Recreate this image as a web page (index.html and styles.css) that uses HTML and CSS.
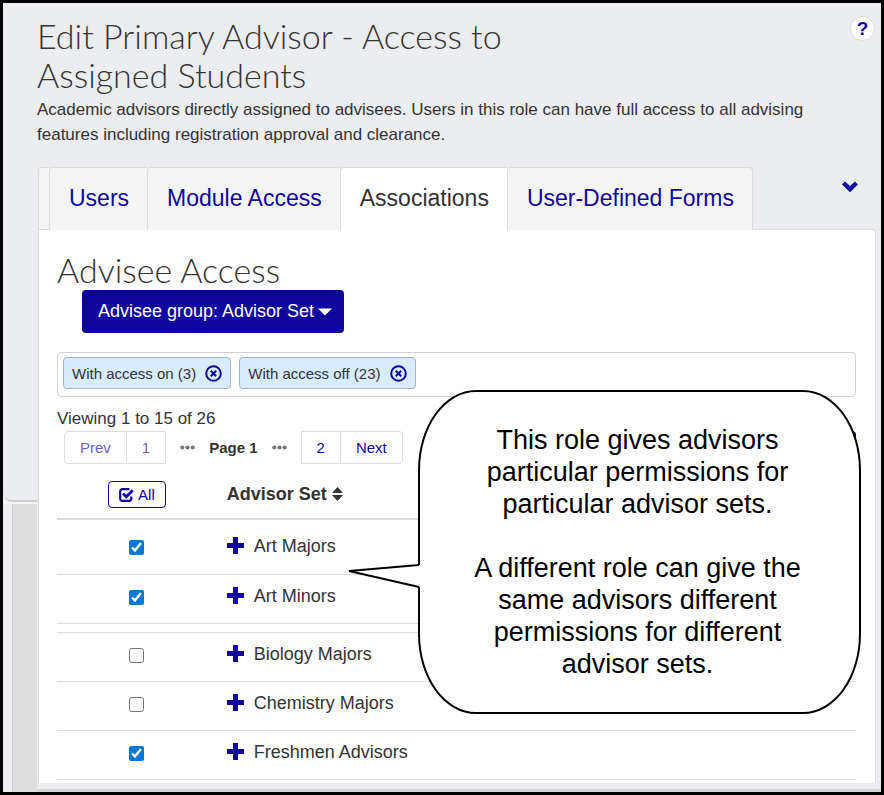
FILE: index.html
```html
<!DOCTYPE html>
<html lang="en">
<head>
    <meta charset="UTF-8">
    <meta name="viewport" content="width=device-width, initial-scale=1.0">
    <title>Edit Primary Advisor</title>
    <link rel="stylesheet" href="styles.css">
</head>
<body>
    <div class="gutter">
        <div class="gutter-top"></div>
        <div class="gutter-bottom"></div>
    </div>

    <main class="main">
        <header class="header">
            <div>
                <h1>Edit Primary Advisor - Access to Assigned Students</h1>
                <p>Academic advisors directly assigned to advisees. Users in this role can have full access to all advising features including registration approval and clearance.</p>
            </div>
            <button class="help" aria-label="Help">?</button>
        </header>

        <nav class="tabs">
            <span class="tab-edge"></span>
            <a class="tab" href="#users">Users</a>
            <a class="tab" href="#modules">Module Access</a>
            <a class="tab active" href="#associations">Associations</a>
            <a class="tab last" href="#forms">User-Defined Forms</a>
            <button class="more" aria-label="More tabs">
                <svg width="18" height="12" viewBox="0 0 18 12"><path d="M1 3.5L4 .5L9 5L14 .5L17 3.5L9 11.2Z" fill="#10069f"/></svg>
            </button>
        </nav>

        <section class="panel">
            <h2>Advisee Access</h2>
            <button class="group-btn">Advisee group: Advisor Set
                <svg width="14" height="8" viewBox="0 0 14 8"><path d="M0 0.5H14L7 7.5Z" fill="#fff"/></svg>
            </button>

            <div class="filters">
                <span class="chip">With access on (3)
                    <button aria-label="Remove filter"><svg width="17" height="17" viewBox="0 0 17 17" fill="none" stroke="#10069f" stroke-width="2"><circle cx="8.5" cy="8.5" r="7.3"/><path d="M5.8 5.8L11.2 11.2M11.2 5.8L5.8 11.2"/></svg></button>
                </span>
                <span class="chip">With access off (23)
                    <button aria-label="Remove filter"><svg width="17" height="17" viewBox="0 0 17 17" fill="none" stroke="#10069f" stroke-width="2"><circle cx="8.5" cy="8.5" r="7.3"/><path d="M5.8 5.8L11.2 11.2M11.2 5.8L5.8 11.2"/></svg></button>
                </span>
            </div>

            <div class="viewing">Viewing 1 to 15 of 26</div>
            <div class="pager">
                <div class="pages">
                    <button disabled>Prev</button>
                    <button disabled>1</button>
                </div>
                <svg class="dots" width="15" height="5" viewBox="0 0 15 5" fill="#777"><circle cx="2.3" cy="2.5" r="2.1"/><circle cx="7.5" cy="2.5" r="2.1"/><circle cx="12.7" cy="2.5" r="2.1"/></svg>
                <b>Page 1</b>
                <svg class="dots" width="15" height="5" viewBox="0 0 15 5" fill="#777"><circle cx="2.3" cy="2.5" r="2.1"/><circle cx="7.5" cy="2.5" r="2.1"/><circle cx="12.7" cy="2.5" r="2.1"/></svg>
                <div class="pages">
                    <button>2</button>
                    <button>Next</button>
                </div>
                <button class="save" aria-label="Save"></button>
            </div>

            <table class="sets">
                <thead>
                    <tr>
                        <th>
                            <button class="all-btn">
                                <svg width="15" height="14" viewBox="0 0 15 14" fill="none" stroke="#10069f"><path d="M10.5 1.2H3.5Q1.2 1.2 1.2 3.5V10.5Q1.2 12.8 3.5 12.8H10Q12.3 12.8 12.3 10.5V8.5" stroke-width="2.2"/><path d="M4 5.5L7.3 8.8L13.8 2.3" stroke-width="2.8"/></svg>
                                All
                            </button>
                        </th>
                        <th>Advisor Set
                            <svg class="sort" width="11" height="14" viewBox="0 0 11 14" fill="#333"><path d="M0 6L5.5 0L11 6ZM0 8H11L5.5 14Z"/></svg>
                        </th>
                    </tr>
                </thead>
                <tbody>
                    <tr class="first">
                        <td><input type="checkbox" id="set1" checked></td>
                        <td><svg class="plus" width="17" height="17" viewBox="0 0 17 17"><path d="M6 0H11V6H17V11H11V17H6V11H0V6H6Z" fill="#10069f"/></svg><label for="set1">Art Majors</label></td>
                    </tr>
                    <tr>
                        <td><input type="checkbox" id="set2" checked></td>
                        <td><svg class="plus" width="17" height="17" viewBox="0 0 17 17"><path d="M6 0H11V6H17V11H11V17H6V11H0V6H6Z" fill="#10069f"/></svg><label for="set2">Art Minors</label></td>
                    </tr>
                    <tr class="spacer"><td colspan="2"></td></tr>
                    <tr>
                        <td><input type="checkbox" id="set3"></td>
                        <td><svg class="plus" width="17" height="17" viewBox="0 0 17 17"><path d="M6 0H11V6H17V11H11V17H6V11H0V6H6Z" fill="#10069f"/></svg><label for="set3">Biology Majors</label></td>
                    </tr>
                    <tr>
                        <td><input type="checkbox" id="set4"></td>
                        <td><svg class="plus" width="17" height="17" viewBox="0 0 17 17"><path d="M6 0H11V6H17V11H11V17H6V11H0V6H6Z" fill="#10069f"/></svg><label for="set4">Chemistry Majors</label></td>
                    </tr>
                    <tr>
                        <td><input type="checkbox" id="set5" checked></td>
                        <td><svg class="plus" width="17" height="17" viewBox="0 0 17 17"><path d="M6 0H11V6H17V11H11V17H6V11H0V6H6Z" fill="#10069f"/></svg><label for="set5">Freshmen Advisors</label></td>
                    </tr>
                </tbody>
            </table>

            <aside class="callout">
                <svg class="tail" width="74" height="26" viewBox="0 0 74 26"><path d="M73 2L2 8L73 24Z" fill="#fff"/><path d="M72 2L2 8L72 24" fill="none" stroke="#000" stroke-width="2"/></svg>
                <p>This role gives advisors particular permissions for particular advisor sets.</p>
                <p>A different role can give the same advisors different permissions for different advisor sets.</p>
            </aside>
        </section>
    </main>
</body>
</html>
```

FILE: styles.css
```css
:root{
    --blue:#10069f;
    --text:#333;
    --line:#dcdcdf;
    --page:#ecedf1;
}
*{
    box-sizing: border-box;
}
body{
    margin: 0;
    min-height: 100vh;
    display: grid;
    grid-template-columns: 34px 1fr;
    border: 3px solid #000;
    background-color: var(--page);
    color: var(--text);
    font-family: "Liberation Sans", Arial, sans-serif;
    font-size: 18px;
}
button{
    font-family: inherit;
    color: var(--blue);
    cursor: pointer;
}
svg{
    flex: none;
}
h1, h2{
    margin: 0;
    font-family: Lato, sans-serif;
    font-weight: 300;
    font-size: 34px;
    line-height: 39px;
}
h2{
    margin-bottom: 1px;
}

/* strip on the left of the page */
.gutter{
    display: grid;
    grid-template-rows: 499fr 290fr;
    background-color: #f4f4f4;
}
.gutter-top{
    background-color: var(--page);
    border-bottom: 2px solid #d0d0d2;
    border-bottom-left-radius: 9px;
}
.gutter-bottom{
    margin-top: 2px;
    background-color: #ddd;
    border-left: 9px solid var(--page);
    box-shadow: inset 1px 0 #ccc;
}

.main{
    min-width: 0;
    border-bottom: 3px solid #d4d4d6;
    padding-bottom: 6px;
}
.header{
    display: flex;
    justify-content: space-between;
    align-items: flex-start;
    padding: 13px 6px 20px 0;
}
.header h1{
    max-width: 520px;
}
.header p{
    margin: 3px 0 0;
    max-width: 800px;
    font-size: 17px;
    line-height: 25px;
}
.help{
    flex: none;
    width: 25px;
    height: 25px;
    padding: 0;
    border: 1px solid #ddd;
    border-radius: 50%;
    background-color: #fff;
    font-size: 19px;
    font-weight: bold;
    line-height: 23px;
}

.tabs{
    display: flex;
    margin: 0 6px 0 1px;
}
.tab-edge{
    width: 11px;
    border: 1px solid var(--line);
    border-width: 1px 0 0 1px;
    border-radius: 4px 0 0 0;
    background-color: #f4f4f4;
}
.tab{
    position: relative;
    z-index: 1;
    height: 63px;
    margin-bottom: -1px;
    padding: 0 18px 0 19px;
    border: 1px solid var(--line);
    border-width: 1px 0 0 1px;
    border-top-left-radius: 4px;
    background-color: #f4f4f4;
    color: var(--blue);
    font-size: 23px;
    line-height: 60px;
    text-decoration: none;
}
.tab.active{
    background-color: #fff;
    color: var(--text);
}
.tab.last{
    border-right-width: 1px;
    border-top-right-radius: 4px;
}
.more{
    margin: 0 10px 19px auto;
    border: 0;
    background: none;
}

.panel{
    position: relative;
    margin: 0 5px 0 1px;
    padding: 20px 19px 3px 18px;
    border: 1px solid var(--line);
    border-bottom: 0;
    border-top-right-radius: 4px;
    background-color: #fff;
}
.group-btn{
    display: flex;
    align-items: center;
    gap: 4px;
    height: 43px;
    margin: 0 0 19px 25px;
    padding: 0 12px 0 16px;
    border: 0;
    border-radius: 4px;
    background-color: var(--blue);
    color: #fff;
    font-size: 18px;
}
.filters{
    display: flex;
    align-items: flex-start;
    gap: 8px;
    height: 45px;
    padding: 4px 5px;
    border: 1px solid #d0d0d6;
    border-radius: 4px;
}
.chip{
    display: flex;
    align-items: center;
    gap: 9px;
    height: 32px;
    padding: 0 8px;
    border: 1px solid #9fb6c6;
    border-radius: 4px;
    background-color: #d9ecff;
    font-size: 15px;
}
.chip button{
    display: flex;
    padding: 0;
    border: 0;
    background: none;
}
.viewing{
    margin-top: 12px;
    font-size: 17px;
    line-height: 20px;
}
.pager{
    display: flex;
    align-items: center;
    gap: 14px;
    margin: 2px 0 0 7px;
    font-size: 15px;
}
.pages{
    display: flex;
    border: 1px solid var(--line);
    border-radius: 4px 0 0 4px;
}
.pages:nth-of-type(2){
    border-radius: 0 4px 4px 0;
}
.pages button{
    height: 31px;
    padding: 0 15px;
    border: 0;
    background: none;
    font-size: 15px;
}
.pages button + button{
    border-left: 1px solid var(--line);
}
.pages button:disabled{
    color: #6a64c2;
}
.save{
    width: 60px;
    height: 33px;
    margin-left: auto;
    border: 0;
    border-radius: 4px;
    background-color: var(--blue);
}

.sets{
    width: 100%;
    border-collapse: collapse;
}
.sets th, .sets td{
    padding: 0 0 4px 10px;
    height: 49px;
    border-bottom: 1px solid var(--line);
    text-align: left;
}
.sets th{
    height: 55px;
    padding-top: 11px;
    border-bottom-width: 2px;
}
.sets th:first-child, .sets td:first-child{
    width: 20%;
    padding-left: 0;
    text-align: center;
}
.sets .first td{
    height: 55px;
    padding-bottom: 0;
}
.sets .spacer td{
    height: 9px;
    padding: 0;
}
.sets input{
    width: 15px;
    height: 15px;
    margin: 0;
    vertical-align: middle;
    accent-color: #0078d4;
}
.sort{
    vertical-align: -1px;
}
.plus{
    margin-right: 10px;
    vertical-align: -2px;
}
.all-btn{
    display: inline-flex;
    align-items: center;
    gap: 4px;
    height: 27px;
    padding: 0 10px;
    border: 1px solid var(--blue);
    border-radius: 4px;
    background-color: #fff;
    font-size: 15px;
}

/* speech bubble over the table */
.callout{
    position: absolute;
    top: 160px;
    right: 14px;
    width: 443px;
    padding: 32px 52px 32px 48px;
    border: 2px solid #000;
    border-radius: 58px / 80px;
    background-color: #fff;
    color: #000;
    font-size: 27px;
    line-height: 32px;
    text-align: center;
}
.callout p{
    margin: 0;
}
.callout p + p{
    margin-top: 32px;
}
.tail{
    position: absolute;
    top: 171px;
    left: -73px;
}
```
